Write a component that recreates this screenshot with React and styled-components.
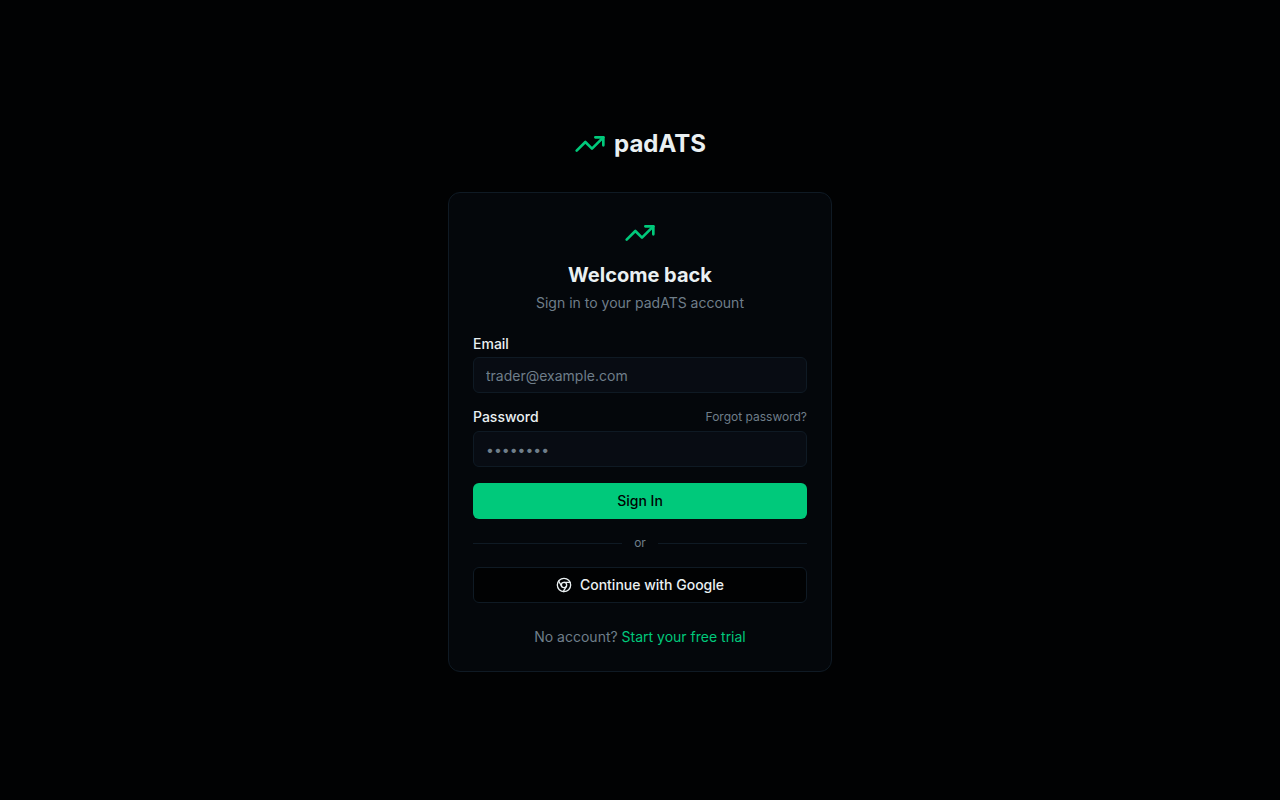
import styled, { createGlobalStyle } from "styled-components"
import { Chrome, TrendingUp } from "lucide-react"

export default function App() {
    return (
        <Page>
            <GlobalStyle />
            <Brand href="#">
                <TrendingUp size={32} />
                <span>padATS</span>
            </Brand>
            <Card>
                <Header>
                    <TrendingUp size={32} />
                    <Title>Welcome back</Title>
                    <Subtitle>Sign in to your padATS account</Subtitle>
                </Header>
                <Form onSubmit={(e) => e.preventDefault()}>
                    <Field>
                        <Label htmlFor="email">Email</Label>
                        <Input id="email" type="email" placeholder="trader@example.com" />
                    </Field>
                    <Field>
                        <LabelRow>
                            <Label htmlFor="password">Password</Label>
                            <ForgotLink href="#">Forgot password?</ForgotLink>
                        </LabelRow>
                        <Input id="password" type="password" placeholder="••••••••" />
                    </Field>
                    <Button type="submit" $primary>Sign In</Button>
                </Form>
                <Divider>or</Divider>
                <Button type="button">
                    <Chrome size={16} />
                    Continue with Google
                </Button>
                <Footer>
                    No account? <a href="#">Start your free trial</a>
                </Footer>
            </Card>
        </Page>
    )
}

const GlobalStyle = createGlobalStyle`
    * {
        box-sizing: border-box;
    }
    body {
        margin: 0;
        background-color: #010203;
        color: #eaf0f2;
        font-family: Inter, "Liberation Sans", sans-serif;
        font-size: 14px;
        line-height: 20px;
    }
    a {
        text-decoration: none;
    }
    button, input {
        font-family: inherit;
        font-size: 14px;
        line-height: 20px;
    }
`

const Page = styled.main`
    min-height: 100vh;
    padding: 16px;
    display: flex;
    flex-direction: column;
    justify-content: center;
    align-items: center;
`

const Brand = styled.a`
    display: flex;
    align-items: center;
    gap: 8px;
    margin-bottom: 32px;
    color: #eaf0f2;
    font-size: 24px;
    font-weight: 700;
    line-height: 32px;
    svg {
        color: #00c97b;
    }
`

const Card = styled.section`
    width: 100%;
    max-width: 384px;
    padding: 24px;
    background-color: #04070b;
    border: 1px solid #0f1a24;
    border-radius: 12px;
`

const Header = styled.header`
    display: flex;
    flex-direction: column;
    align-items: center;
    margin-bottom: 24px;
    svg {
        color: #00c97b;
        margin-bottom: 12px;
    }
`

const Title = styled.h1`
    margin: 0;
    font-size: 20px;
    font-weight: 700;
    line-height: 28px;
`

const Subtitle = styled.p`
    margin: 4px 0 0;
    color: #6f7e8a;
`

const Form = styled.form`
    display: flex;
    flex-direction: column;
    gap: 16px;
`

const Field = styled.div`
    display: flex;
    flex-direction: column;
    gap: 6px;
`

const LabelRow = styled.div`
    display: flex;
    justify-content: space-between;
    align-items: center;
`

const Label = styled.label`
    font-weight: 500;
    line-height: 14px;
`

const ForgotLink = styled.a`
    color: #6f7e8a;
    font-size: 12px;
    line-height: 16px;
`

const Input = styled.input`
    width: 100%;
    height: 36px;
    padding: 4px 12px;
    background-color: #080c13;
    color: #eaf0f2;
    border: 1px solid #0f1a24;
    border-radius: 6px;
    &::placeholder {
        color: #6f7e8a;
        opacity: 1;
    }
`

const Button = styled.button`
    width: 100%;
    height: 36px;
    display: flex;
    justify-content: center;
    align-items: center;
    gap: 8px;
    background-color: ${({ $primary }) => ($primary ? "#00c97b" : "#010203")};
    color: ${({ $primary }) => ($primary ? "#010203" : "#eaf0f2")};
    font-weight: 500;
    border: ${({ $primary }) => ($primary ? "0" : "1px solid #0f1a24")};
    border-radius: 6px;
    cursor: pointer;
`

const Divider = styled.div`
    display: flex;
    align-items: center;
    gap: 12px;
    margin: 16px 0;
    color: #6f7e8a;
    font-size: 12px;
    line-height: 16px;
    &::before, &::after {
        content: "";
        flex: 1;
        height: 1px;
        background-color: #0f1a24;
    }
`

const Footer = styled.p`
    margin: 24px 0 0;
    color: #6f7e8a;
    text-align: center;
    a {
        color: #00c97b;
    }
`
